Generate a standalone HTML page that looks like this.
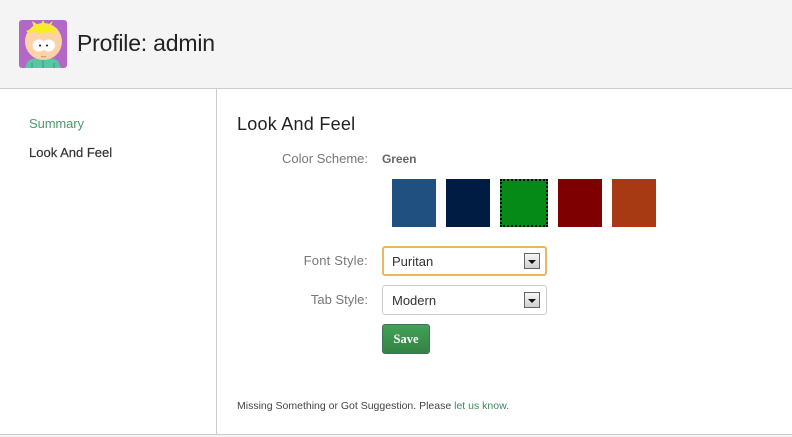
<!DOCTYPE html>
<html lang="en">
<head>
<meta charset="utf-8">
<title>Profile: admin</title>
<style>
html,body{margin:0;padding:0;background:#fff;}
body{position:relative;width:792px;height:437px;overflow:hidden;font-family:"Liberation Sans",sans-serif;color:#333;}
.t{position:absolute;white-space:nowrap;line-height:1;}
.b{position:absolute;}
.sw{position:absolute;top:179px;width:44px;height:48px;}
.sel{position:absolute;left:382px;width:163px;height:28px;border:1px solid #ccc;border-radius:3px;background:#fff;}
.arr{position:absolute;left:524px;width:14px;height:14px;border:1px solid #666;background:linear-gradient(#f6f6f6,#cfcfcf);}
.arr:after{content:"";position:absolute;left:3px;top:6px;border-left:4px solid transparent;border-right:4px solid transparent;border-top:4px solid #111;}
</style>
</head>
<body>
<div class="b" style="left:0;top:0;width:792px;height:88px;background:#f4f4f4;"></div>
<div class="b" style="left:0;top:88px;width:792px;height:1px;background:#ccc;"></div>
<div class="b" style="left:216px;top:89px;width:1px;height:345px;background:#ccc;"></div>
<div class="b" style="left:0;top:434px;width:792px;height:1px;background:#ccc;"></div>
<div class="b" style="left:0;top:435px;width:792px;height:2px;background:#f4f4f4;"></div>

<svg class="b" style="left:19px;top:20px" width="48" height="48" viewBox="0 0 48 48">
<defs><clipPath id="c"><rect width="48" height="48" rx="3"/></clipPath></defs>
<g clip-path="url(#c)">
<rect width="48" height="48" fill="#b368c6"/>
<path d="M6 48 L9 41 Q24 33 39 41 L42 48Z" fill="#55c7a5"/>
<path d="M24 38V48M13 43V48M35 43V48" stroke="#2c8a70" stroke-width=".7" fill="none"/>
<circle cx="24.500" cy="21.500" r="18.500" fill="#fdd2a8"/>
<path d="M7 11 L15 8 L13 1 L21 6 L24 0 L27 6 L34 1 L31 7 L39 9 L35 11 L38 14 L28 12 L22 14 L14 11 L11 14Z" fill="#f6ee1e"/>
<ellipse cx="20" cy="25.500" rx="6.500" ry="6" fill="#fff"/>
<ellipse cx="29.500" cy="25.500" rx="6.500" ry="6" fill="#fff"/>
<circle cx="21" cy="25.500" r="1" fill="#111"/>
<circle cx="28" cy="25.500" r="1" fill="#111"/>
<path d="M22 36 Q24.500 38 27 36" stroke="#b5805a" stroke-width=".8" fill="none"/>
</g>
</svg>

<div class="t" style="left:77px;top:32px;font-size:23px;color:#222;letter-spacing:-.2px;">Profile: admin</div>

<div class="t" style="left:29px;top:117px;font-size:13px;color:#4f9a6a;letter-spacing:-.1px;">Summary</div>
<div class="t" style="left:29px;top:146px;font-size:13px;color:#333;-webkit-text-stroke:.2px #333;">Look And Feel</div>

<div class="t" style="left:237px;top:115px;font-size:18px;color:#222;letter-spacing:.25px;">Look And Feel</div>

<div class="t" style="right:424px;top:152px;font-size:13px;color:#777;">Color Scheme:</div>
<div class="t" style="left:382px;top:153px;font-size:12px;font-weight:bold;color:#666;letter-spacing:-.05px;">Green</div>

<div class="sw" style="left:392px;background:#20507f;"></div>
<div class="sw" style="left:446px;background:#001c43;"></div>
<div class="sw" style="left:500px;width:44px;height:44px;background:#058a17;border:2px dotted #000;"></div>
<div class="sw" style="left:558px;background:#7f0000;"></div>
<div class="sw" style="left:612px;background:#a73a12;"></div>

<div class="t" style="right:424px;top:254px;font-size:13px;color:#777;letter-spacing:.2px;">Font Style:</div>
<div class="sel" style="top:246px;border:2px solid #e8b860;width:161px;height:26px;"></div>
<div class="t" style="left:392px;top:255px;font-size:13px;color:#333;">Puritan</div>
<div class="arr" style="top:253px;"></div>

<div class="t" style="right:424px;top:293px;font-size:13px;color:#777;">Tab Style:</div>
<div class="sel" style="top:285px;"></div>
<div class="t" style="left:392px;top:294px;font-size:13px;color:#333;">Modern</div>
<div class="arr" style="top:292px;"></div>

<div class="b" style="left:382px;top:324px;width:46px;height:28px;border:1px solid #3f6f62;border-radius:3px;background:linear-gradient(#42a157,#348342);"></div>
<div class="t" style="left:382px;width:48px;text-align:center;top:333px;font-family:'Liberation Serif',serif;font-weight:bold;font-size:12.500px;color:#fff;">Save</div>

<div class="t" style="left:237px;top:401px;font-size:10.500px;color:#444;">Missing Something or Got Suggestion. Please <span style="color:#3f8a5c;">let us know.</span></div>
</body>
</html>
